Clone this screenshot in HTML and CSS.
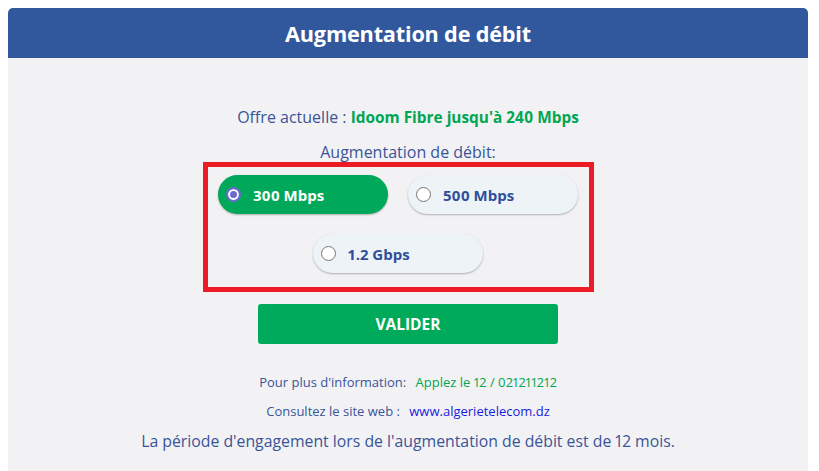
FILE: index.html
```html
<!DOCTYPE html>
<html lang="fr">
<head>
<meta charset="utf-8">
<title>Augmentation de débit</title>
<link rel="stylesheet" href="styles.css">
</head>
<body>
<div class="card">
  <div class="card-header">Augmentation de débit</div>
  <div class="card-body">
    <p class="offer">Offre actuelle : <span class="green-bold">Idoom Fibre jusqu'à 240 Mbps</span></p>
    <p class="label">Augmentation de débit:</p>
    <div class="choices">
      <div class="row">
        <label class="pill selected"><span class="radio checked"></span><span>300 Mbps</span></label>
        <label class="pill"><span class="radio"></span><span>500 Mbps</span></label>
      </div>
      <div class="row">
        <label class="pill"><span class="radio"></span><span>1.2 Gbps</span></label>
      </div>
    </div>
    <button class="validate">VALIDER</button>
    <p class="info first">Pour plus d'information: <span class="green">Applez le 12 / 021211212</span></p>
    <p class="info">Consultez le site web : <a class="link" href="#">www.algerietelecom.dz</a></p>
    <p class="note">La période d'engagement lors de l'augmentation de débit est de 12 mois.</p>
  </div>
</div>
</body>
</html>
```
FILE: styles.css
```css
html, body { margin: 0; padding: 0; background: #ffffff; }
body { padding: 8px; font-family: "Open Sans", Roboto, sans-serif; color: #3a5499; font-variant-numeric: proportional-nums; }
.card { width: 800px; background: #f2f2f4; border-radius: 5px 5px 0 0; overflow: hidden; height: 463px; }
.card-header { background: #31579c; color: #fff; height: 50px; display: flex; align-items: center; justify-content: center; font-size: 21.7px; font-weight: 700; letter-spacing: -0.2px; }
.card-body { display: flex; flex-direction: column; align-items: center; padding-top: 50px; }
p { margin: 0; }
.offer { font-size: 16px; line-height: 18px; }
.green-bold { color: #00a651; font-weight: 700; font-size: 15.4px; }
.label { font-size: 16px; line-height: 18px; margin-top: 16px; }
.choices { margin-top: 1px; margin-right: 20px; width: 381px; height: 112px; border: 5px solid #ed1c24; display: flex; flex-direction: column; align-items: center; gap: 20px; padding-top: 8px; box-sizing: content-box; }
.row { display: flex; gap: 20px; }
.pill { width: 170px; height: 39px; box-sizing: border-box; border-radius: 20px; background: #eef3f8; box-shadow: 0 1px 2px rgba(0,0,0,0.28); display: flex; align-items: center; padding-left: 8px; gap: 12px; font-size: 15px; font-weight: 700; color: #2f4f9a; }
.pill.selected { background: #00a859; color: #ffffff; }
.radio { width: 15px; height: 15px; border-radius: 50%; border: 1px solid #767676; background: #fff; box-sizing: border-box; flex: none; }
.radio.checked { border: 2px solid #6b6bce; background: #6b6bce; box-shadow: inset 0 0 0 2px #ffffff; }
.validate { margin-top: 12px; width: 300px; height: 40px; border: none; border-radius: 3px; background: #00aa5b; color: #fff; font-family: inherit; font-weight: 700; font-size: 15.5px; }
.info { font-size: 13px; line-height: 15px; margin-top: 14px; }
.info.first { margin-top: 31px; }
.green { color: #00a651; margin-left: 6px; }
.link { color: #1a1adf; text-decoration: none; margin-left: 6px; }
.note { font-size: 15.8px; line-height: 19px; margin-top: 13px; }
```
